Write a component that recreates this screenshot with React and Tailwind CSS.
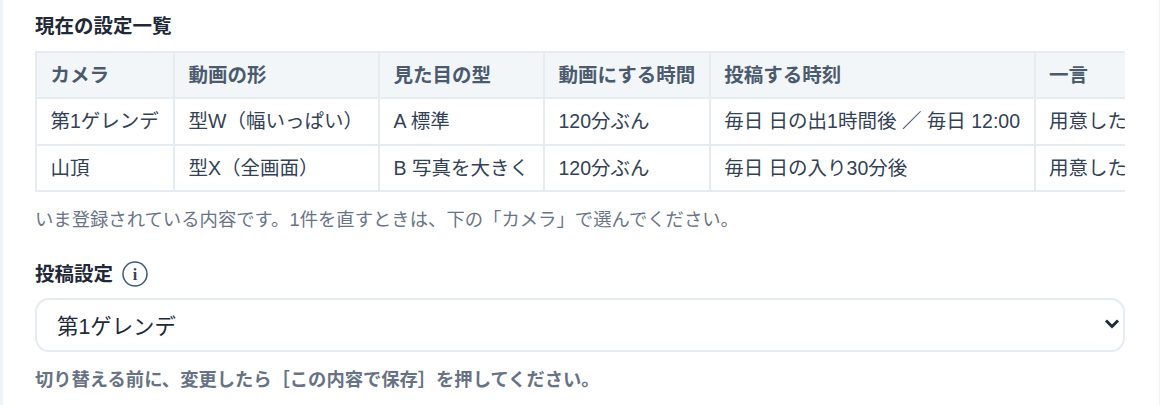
const rows = [
  ["第1ゲレンデ", "型W（幅いっぱい）", "A 標準", "120分ぶん", "毎日 日の出1時間後 ／ 毎日 12:00", "用意した一言を使います"],
  ["山頂", "型X（全画面）", "B 写真を大きく", "120分ぶん", "毎日 日の入り30分後", "用意した一言を使います"],
];
const heads = [
  ["カメラ", "w-[138px]"],
  ["動画の形", "w-[205px]"],
  ["見た目の型", "w-[165px]"],
  ["動画にする時間", "w-[165px]"],
  ["投稿する時刻", "w-[323px]"],
  ["一言", ""],
];

export default function App() {
  return (
    <div className="h-[405px] overflow-hidden bg-[#eef2f9] pl-[3px] pr-px font-['Liberation_Sans','Noto_Sans_CJK_JP',sans-serif] text-[#1f2937]">
      <div className="h-full bg-white pl-8 pr-[34px] pt-[11px]">
        <h2 className="text-[19.5px] font-bold leading-[30px] text-[#1f2937]">現在の設定一覧</h2>
        <div className="mt-2.5 overflow-hidden">
          <table className="w-max border-collapse whitespace-nowrap text-[19.5px] leading-[26px]">
            <thead>
              <tr>
                {heads.map(([h, w]) => (
                  <th key={h} className={`${w} h-[46px] border-2 border-[#e6ebf2] bg-[#f3f6f9] px-[13.5px] py-0 text-left font-bold text-[#4b5b6d]`}>{h}</th>
                ))}
              </tr>
            </thead>
            <tbody>
              {rows.map((r) => (
                <tr key={r[0]}>
                  {r.map((c, i) => (
                    <td key={i} className="h-[46.5px] border-2 border-[#e6ebf2] px-[13.5px] py-0 text-[#334155]">{c}</td>
                  ))}
                </tr>
              ))}
            </tbody>
          </table>
        </div>
        <p className="mt-3.5 text-[18.35px] leading-[28px] text-[#697586]">いま登録されている内容です。1件を直すときは、下の「カメラ」で選んでください。</p>
        <div className="mt-[25px] flex items-center gap-[9px]">
          <span className="text-[19.5px] font-bold leading-[30px] text-[#1f2937]">投稿設定</span>
          <svg width="26" height="26" viewBox="0 0 26 26" fill="none">
            <circle cx="13" cy="13" r="12" stroke="#3f5a7a" strokeWidth="1.5" />
            <text x="13" y="18.5" textAnchor="middle" fontFamily="'Liberation Serif', serif" fontWeight="700" fontSize="16" fill="#334155">i</text>
          </svg>
        </div>
        <div className="relative mt-[9px]">
          <select className="h-[54px] w-full appearance-none rounded-[14px] border-2 border-[#e6ebf2] bg-white pl-[20px] pr-8 pt-1 text-[21.4px] text-[#1f2937]">
            <option>第1ゲレンデ</option>
            <option>山頂</option>
          </select>
          <svg className="pointer-events-none absolute right-[6px] top-[21px]" width="14" height="10" viewBox="0 0 14 10" fill="none" stroke="#1f2937" strokeWidth="3" strokeLinecap="square">
            <path d="M2 2.5 L7 7.5 L12 2.5" />
          </svg>
        </div>
        <p className="mt-3.5 text-[18.3px] font-bold leading-[28px] text-[#677384]">切り替える前に、変更したら［この内容で保存］を押してください。</p>
      </div>
    </div>
  );
}
